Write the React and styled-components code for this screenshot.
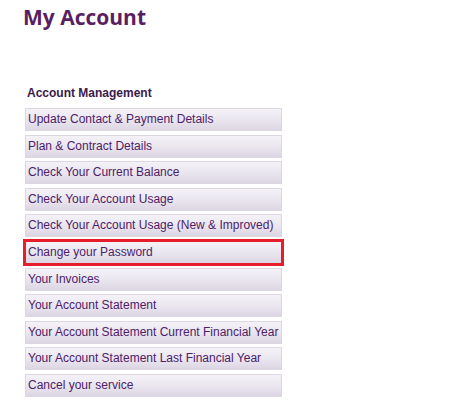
import React from "react";
import styled, { createGlobalStyle } from "styled-components";

const GlobalStyle = createGlobalStyle`
  html, body {
    margin: 0;
    padding: 0;
    background: #ffffff;
  }
  body {
    font-family: "Liberation Sans", Arial, sans-serif;
  }
`;

const links = [
  "Update Contact & Payment Details",
  "Plan & Contract Details",
  "Check Your Current Balance",
  "Check Your Account Usage",
  "Check Your Account Usage (New & Improved)",
  "Change your Password",
  "Your Invoices",
  "Your Account Statement",
  "Your Account Statement Current Financial Year",
  "Your Account Statement Last Financial Year",
  "Cancel your service",
];

const App = () => {
  return (
    <Page>
      <GlobalStyle />
      <Title>My Account</Title>
      <Section>
        <SectionHeading>Account Management</SectionHeading>
        <LinkList>
          {links.map((label) => (
            <li key={label}>
              <MenuButton href="#" $active={label === "Change your Password"}>
                {label}
              </MenuButton>
            </li>
          ))}
        </LinkList>
      </Section>
    </Page>
  );
};

const Page = styled.main`
  padding: 3px 0 0 25px;
  width: 257px;
`;

const Title = styled.h1`
  margin: 0 0 0 -2px;
  font-family: "Open Sans", "Liberation Sans", sans-serif;
  font-weight: 700;
  font-size: 21px;
  line-height: 28px;
  color: #5a1f62;
`;

const Section = styled.section`
  margin-top: 55px;
`;

const SectionHeading = styled.h3`
  margin: 0 0 7px 2px;
  font-size: 12px;
  font-weight: 700;
  line-height: 15px;
  color: #3b1a4c;
`;

const LinkList = styled.ul`
  list-style: none;
  margin: 0;
  padding: 0;
  display: flex;
  flex-direction: column;
  gap: 3.6px;
`;

const MenuButton = styled.a`
  display: block;
  box-sizing: border-box;
  height: 23px;
  padding: 0 0 0 2px;
  border: 1px solid ${(p) => (p.$active ? "#e61e2b" : "#dcd7e3")};
  background: linear-gradient(#f4f2f7, #e9e5ee 55%, #dcd6e3);
  font-size: 12px;
  line-height: 21px;
  color: #4d2169;
  text-decoration: none;
  white-space: nowrap;
  overflow: hidden;
  box-shadow: ${(p) => (p.$active ? "0 0 0 2px #e61e2b" : "none")};
`;

export default App;
